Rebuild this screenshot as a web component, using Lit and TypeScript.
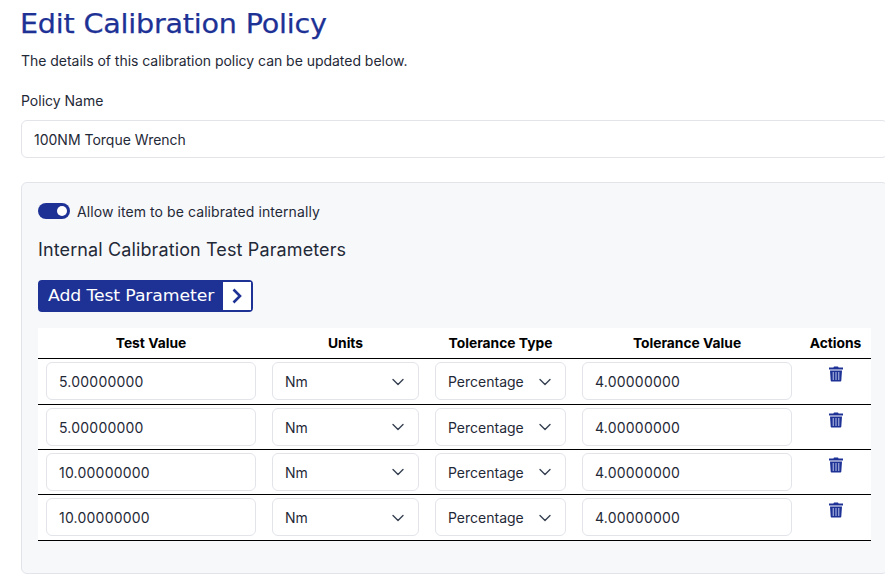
import { LitElement, html, css, svg } from "lit";
import { customElement } from "lit/decorators.js";

const rows = [
  ["5.00000000", "Nm", "Percentage", "4.00000000"],
  ["5.00000000", "Nm", "Percentage", "4.00000000"],
  ["10.00000000", "Nm", "Percentage", "4.00000000"],
  ["10.00000000", "Nm", "Percentage", "4.00000000"],
];

const chevron = svg`<path d="M1 1.5 L6 6.5 L11 1.5" fill="none" stroke="#374151" stroke-width="1.4" stroke-linecap="round" stroke-linejoin="round"/>`;
const trash = svg`<path fill="#1e3296" d="M5 0.4h4l.6 1.1H14v1.9H0V1.5h4.4zM1 4.4h12l-.7 10.2c0 .6-.5 1-1.1 1H2.8c-.6 0-1.1-.4-1.1-1z"/><path fill="#8f9bd0" d="M3.6 6h1.4v8H3.6zM6.3 6h1.4v8H6.3zM9 6h1.4v8H9z"/>`;

@customElement("app-root")
export class AppRoot extends LitElement {
  static styles = css`
    :host { display: block; width: 885px; height: 586px; overflow: hidden; background: #fff; font-family: "Inter", "Liberation Sans", sans-serif; color: #1f2937; }
    .page { width: 867px; padding: 0 0 0 21px; }
    h1 { margin: 0 0 0 -1px; padding-top: 6px; height: 32px; font: 400 26.5px/36px "DejaVu Sans", sans-serif; color: #1e3296; letter-spacing: -0.2px; white-space: nowrap; transform: scaleX(1.08); transform-origin: left; -webkit-text-stroke: 0.25px #1e3296; }
    .lead { margin: 13px 0 0; font-size: 14px; line-height: 20px; letter-spacing: -0.03px; }
    .label { margin-top: 20px; font-size: 14px; line-height: 20px; }
    .field { box-sizing: border-box; height: 38px; border: 1px solid #e2e4ea; border-radius: 6px; background: #fff; display: flex; align-items: center; padding: 0 12px; font-size: 14px; color: #1f2937; white-space: nowrap; }
    .cell .field { padding-top: 0.9px; }
    .num { letter-spacing: 0.22px; }
    .name { margin-top: 9px; }
    .panel { box-sizing: border-box; margin-top: 24px; height: 392px; width: 867px; padding: 19px 17px 0 16px; background: #f7f8fa; border: 1px solid #e2e4ea; border-radius: 6px; }
    .toggle-row { display: flex; align-items: center; gap: 7px; height: 18px; font-size: 14px; letter-spacing: 0.08px; }
    .toggle { width: 32px; height: 16px; border-radius: 8px; background: #1e3296; display: flex; justify-content: flex-end; align-items: center; padding-right: 3px; box-sizing: border-box; }
    .toggle i { width: 10px; height: 10px; border-radius: 50%; background: #fff; }
    h2 { margin: 18px 0 0; font-weight: 400; font-size: 18px; line-height: 24px; color: #1f2937; letter-spacing: 0.12px; }
    .btn { margin-top: 18px; box-sizing: border-box; width: 215px; height: 32px; display: flex; align-items: stretch; background: #1e3296; border: 2px solid #1e3296; border-radius: 4px; color: #fff; }
    .btn span { flex: 1; display: flex; align-items: center; margin-left: 8px; font: 400 16.5px "DejaVu Sans", sans-serif; white-space: nowrap; letter-spacing: -0.1px; transform: scaleX(1.045); transform-origin: left; margin-top: -1px; }
    .btn b { width: 28px; background: #fff; display: flex; align-items: center; justify-content: center; }
    .table { margin-top: 16px; width: 833px; background: #fff; }
    .row { display: grid; grid-template-columns: 226px 163px 147px 226px 71px; box-sizing: border-box; height: 45.4px; border-bottom: 1.4px solid #000; }
    .row.head { height: 31.2px; font-weight: 700; font-size: 13.8px; color: #000; align-items: center; text-align: center; }
    .cell { padding: 3px 8px 0; box-sizing: border-box; }
    .sel { justify-content: space-between; }
    .sel svg { margin-right: 2px; flex: none; }
    .act { padding-top: 7px; text-align: center; }
    .act svg { display: block; margin: 0 auto; }
  `;

  render() {
    return html`<div class="page">
      <h1>Edit Calibration Policy</h1>
      <p class="lead">The details of this calibration policy can be updated below.</p>
      <div class="label">Policy Name</div>
      <div class="field name">100NM Torque Wrench</div>
      <div class="panel">
        <div class="toggle-row"><div class="toggle"><i></i></div>Allow item to be calibrated internally</div>
        <h2>Internal Calibration Test Parameters</h2>
        <div class="btn"><span>Add Test Parameter</span><b>
          <svg width="12" height="16" viewBox="0 0 12 16"><path d="M2.5 1.5 L9 8 L2.5 14.5" fill="none" stroke="#1e3296" stroke-width="2.6"/></svg></b></div>
        <div class="table">
          <div class="row head"><div>Test Value</div><div>Units</div><div>Tolerance Type</div><div>Tolerance Value</div><div>Actions</div></div>
          ${rows.map((r) => html`<div class="row">
            <div class="cell"><div class="field num">${r[0]}</div></div>
            <div class="cell"><div class="field sel">${r[1]}<svg width="12" height="8" viewBox="0 0 12 8">${chevron}</svg></div></div>
            <div class="cell"><div class="field sel">${r[2]}<svg width="12" height="8" viewBox="0 0 12 8">${chevron}</svg></div></div>
            <div class="cell"><div class="field num">${r[3]}</div></div>
            <div class="cell act"><svg width="14" height="16" viewBox="0 0 14 16">${trash}</svg></div>
          </div>`)}
        </div>
      </div>
    </div>`;
  }
}
